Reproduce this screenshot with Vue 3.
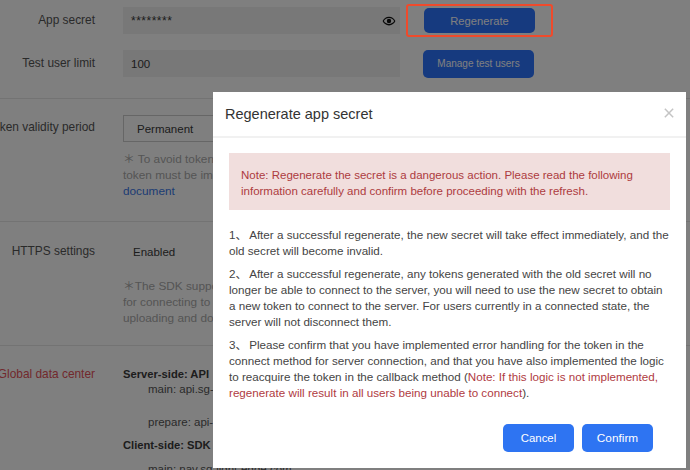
<script setup>
const paragraphs = [
  { n: '1、', t: 'After a successful regenerate, the new secret will take effect immediately, and the old secret will become invalid.' },
  { n: '2、', t: 'After a successful regenerate, any tokens generated with the old secret will no longer be able to connect to the server, you will need to use the new secret to obtain a new token to connect to the server. For users currently in a connected state, the server will not disconnect them.' },
]
</script>

<template>
  <div class="page">
    <section class="group first">
      <div class="row">
        <div class="label">App secret</div>
        <div class="field secret">
          <span class="stars">********</span>
          <svg class="eye" viewBox="0 0 24 24" width="14" height="14">
            <path d="M12 4.500C7 4.500 2.700 7.800 1 12c1.700 4.200 6 7.500 11 7.500s9.300-3.300 11-7.500c-1.700-4.200-6-7.500-11-7.500zm0 12.500c-3.800 0-7.200-2.100-8.800-5 1.600-2.900 5-5 8.800-5s7.200 2.100 8.800 5c-1.600 2.900-5 5-8.800 5z" fill="#111" />
            <circle cx="12" cy="12" r="3.800" fill="#111" />
          </svg>
        </div>
        <div class="highlight"><button class="btn-dark regen">Regenerate</button></div>
      </div>
      <div class="row second">
        <div class="label">Test user limit</div>
        <div class="field">100</div>
        <button class="btn-dark manage">Manage test users</button>
      </div>
    </section>

    <section class="group token">
      <div class="label">Token validity period</div>
      <div class="col">
        <div class="select">Permanent</div>
        <div class="hint">
          <div>＊ To avoid token expiration, the</div>
          <div>token must be implemented in</div>
          <div class="link">document</div>
        </div>
      </div>
    </section>

    <section class="group https">
      <div class="label">HTTPS settings</div>
      <div class="col">
        <div class="plain">Enabled</div>
        <div class="hint">
          <div>＊The SDK supports HTTPS</div>
          <div>for connecting to the server and</div>
          <div>uploading and downloading</div>
        </div>
      </div>
    </section>

    <section class="global">
      <div class="label red">Global data center</div>
      <div class="col">
        <div class="head">Server-side: API</div>
        <div class="addr a1">main: api.sg-all.ronghub.com</div>
        <div class="addr a2">prepare: api-sg-b.ronghub.com</div>
        <div class="head h2">Client-side: SDK</div>
        <div class="addr a3">main: nav.sg-light-edge.com</div>
      </div>
    </section>

    <div class="backdrop"></div>

    <div class="modal">
      <header class="modal-head">
        <span class="title">Regenerate app secret</span>
        <svg class="close" viewBox="0 0 12 12" width="10" height="10">
          <path d="M1 1l10 10M11 1L1 11" stroke="#c4c4c4" stroke-width="1.800" fill="none" />
        </svg>
      </header>
      <div class="modal-body">
        <div class="alert">Note: Regenerate the secret is a dangerous action. Please read the following information carefully and confirm before proceeding with the refresh.</div>
        <p v-for="p in paragraphs" :key="p.n" class="para"><span class="num">{{ p.n }}</span>{{ p.t }}</p>
        <p class="para"><span class="num">3、</span>Please confirm that you have implemented error handling for the token in the connect method for server connection, and that you have also implemented the logic to reacquire the token in the callback method (<span class="danger">Note: If this logic is not implemented, regenerate will result in all users being unable to connect</span>).</p>
      </div>
      <footer class="modal-foot">
        <button class="btn cancel">Cancel</button>
        <button class="btn">Confirm</button>
      </footer>
    </div>
  </div>
</template>

<style>
html, body { margin: 0; padding: 0; overflow: hidden; }
</style>

<style scoped>
.page {
  position: relative;
  width: 690px;
  height: 470px;
  overflow: hidden;
  background: #fff;
  font-family: "Liberation Sans", "Noto Sans CJK SC", sans-serif;
  font-size: 11.500px;
  color: #3a3a3a;
}
.group { border-bottom: 1px solid #e6e6e6; box-sizing: border-box; }
.first { height: 99px; padding-top: 7px; }
.row { display: flex; align-items: center; height: 27px; }
.second { margin-top: 16px; }
.label { width: 95px; flex: none; text-align: right; margin-right: 28px; white-space: nowrap; direction: rtl; color: #555; font-size: 11.900px; }
.first .label { position: relative; top: -1px; }
.field {
  width: 277px; height: 27px; box-sizing: border-box; background: #f0f0f0;
  padding: 0 4px 0 8px; line-height: 28px; display: flex; justify-content: space-between; align-items: center;
}
.stars { font-size: 12px; letter-spacing: 0.500px; }
.highlight {
  position: relative;
  margin-left: 6px; width: 147px; height: 33px; box-sizing: border-box;
  display: flex; justify-content: center; align-items: center;
}
.highlight::after {
  content: ""; position: absolute; inset: 0; z-index: 2;
  border: 2px solid #ef4a2b; border-radius: 3px;
}
.btn-dark {
  width: 111px; border: 0; border-radius: 5px; background: #2c74ff; color: #fff; padding: 0;
  font-family: inherit;
}
.regen { height: 25px; font-size: 11.200px; }
.manage { height: 28px; font-size: 10px; margin-left: 23px; }
.token { display: flex; height: 123px; padding-top: 16px; }
.token .label { line-height: 24px; }
.col { flex: none; width: 400px; }
.select {
  width: 150px; height: 27px; box-sizing: border-box; border: 1px solid #ccc; padding-left: 13px; line-height: 27px;
}
.hint { color: #aaa; line-height: 16px; margin-top: 9px; white-space: nowrap; font-size: 11.800px; }
.link { color: #3a78e8; }
.https { display: flex; height: 124px; padding-top: 21px; }
.https .label { line-height: 16px; }
.plain { padding-left: 10px; line-height: 18px; }
.https .hint { margin-top: 17px; }
.global { display: flex; padding-top: 20px; }
.global .label { line-height: 16px; }
.red { color: #e4525a; }
.head { font-weight: 700; line-height: 16px; font-size: 11.200px; }
.addr { padding-left: 25px; line-height: 16px; color: #555; white-space: nowrap; }
.a1 { margin-top: -1px; }
.a2 { margin-top: 17px; }
.h2 { margin-top: 7px; }
.a3 { margin-top: 8px; }
.backdrop { position: absolute; inset: 0; z-index: 1; background: rgba(0, 0, 0, 0.5); }
.modal {
  position: absolute; z-index: 3; left: 213px; top: 92px; width: 473px; height: 376px;
  background: #fff; display: flex; flex-direction: column;
}
.modal-head {
  height: 44px; flex: none; display: flex; justify-content: space-between; align-items: center;
  padding: 0 12px; border-bottom: 2px solid #f1f1f1; box-sizing: content-box;
}
.title { font-size: 14.500px; color: #333; }
.close { margin-top: -2px; margin-right: 0; }
.modal-body { padding: 15px 16px 0; flex: 1; line-height: 16px; color: #444; font-size: 11.650px; }
.alert {
  background: #f1dedd; color: #ad3b40; padding: 14px 12px 11px; line-height: 16px; margin-bottom: 17px; font-size: 11.500px;
}
.para { margin: 0 0 7px; line-height: 16px; }
.num { margin-right: 2px; }
.danger { color: #b03a3f; }
.modal-foot { display: flex; justify-content: flex-end; gap: 8px; padding: 0 33px 16px 0; }
.btn {
  width: 71px; height: 28px; background: #2e74f2; color: #fff; border: 0; border-radius: 5px; padding: 0;
  font-family: inherit; font-size: 11.800px;
}
.cancel { font-size: 11.400px; }
</style>
